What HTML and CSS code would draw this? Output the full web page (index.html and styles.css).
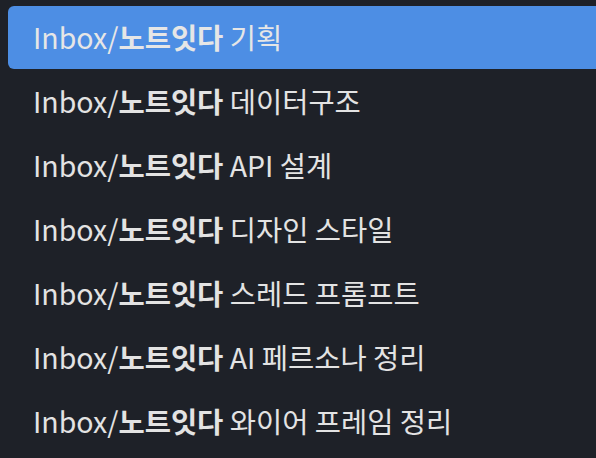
FILE: index.html
```html
<!DOCTYPE HTML>
<html>
<head>
    <title>Notes</title>
    <meta charset="utf-8">
    <link rel="stylesheet" href="styles.css">
</head>
<body>
    <ul class="notes">
        <li class="note selected"><span class="folder">Inbox/</span><b>노트잇다</b> 기획</li>
        <li class="note"><span class="folder">Inbox/</span><b>노트잇다</b> 데이터구조</li>
        <li class="note"><span class="folder">Inbox/</span><b>노트잇다</b> API 설계</li>
        <li class="note"><span class="folder">Inbox/</span><b>노트잇다</b> 디자인 스타일</li>
        <li class="note"><span class="folder">Inbox/</span><b>노트잇다</b> 스레드 프롬프트</li>
        <li class="note"><span class="folder">Inbox/</span><b>노트잇다</b> AI 페르소나 정리</li>
        <li class="note"><span class="folder">Inbox/</span><b>노트잇다</b> 와이어 프레임 정리</li>
    </ul>
</body>
</html>
```

FILE: styles.css
```css
body
{
    margin: 0;
    background: #1e2128;
    font-family: "Noto Sans CJK KR", "Noto Sans", sans-serif;
    overflow: hidden;
}

ul.notes
{
    list-style: none;
    margin: 0;
    padding: 5px 0 0 8px;
}

li.note
{
    display: flex;
    align-items: center;
    height: 63px;
    margin: 1px 0;
    padding-left: 25px;
    font-size: 28.5px;
    line-height: 1;
    color: #e3e3e3;
    white-space: pre;
    border-radius: 6px 0 0 6px;
}

li.note b
{
    font-weight: bold;
}

li.selected
{
    background: #4d8ee4;
    color: #e6e6e6;
}
```
